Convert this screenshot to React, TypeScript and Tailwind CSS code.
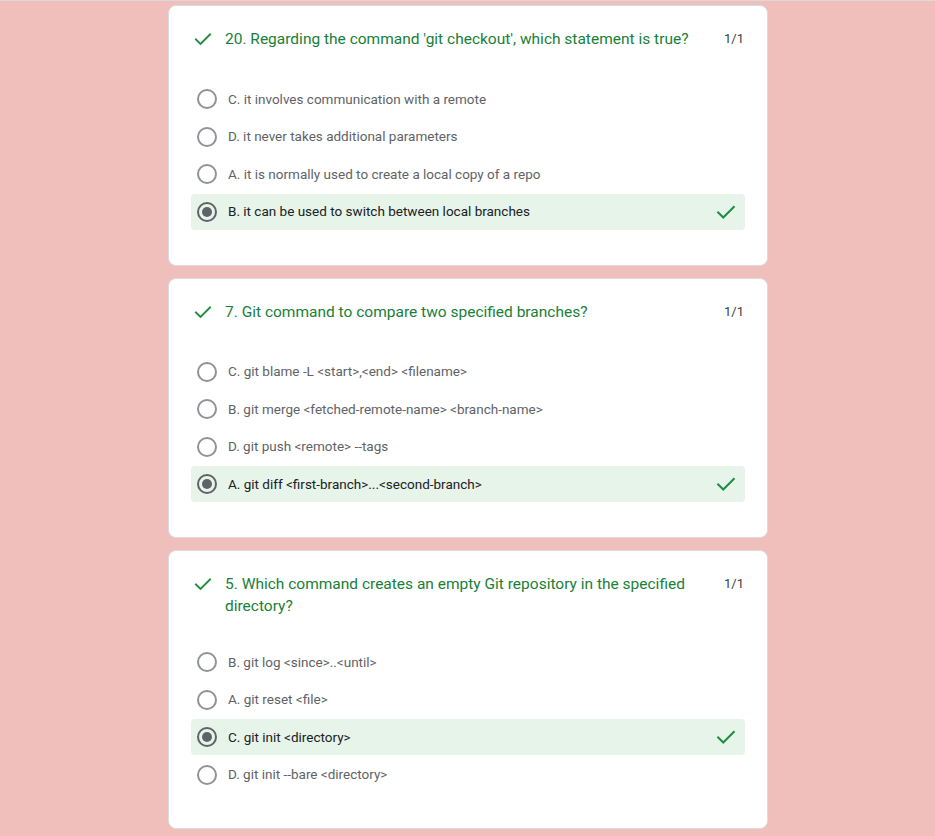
import React from "react";

type Opt = { label: string; selected?: boolean };
type Q = { title: string; options: Opt[] };

const questions: Q[] = [
  {
    title: "20. Regarding the command 'git checkout', which statement is true?",
    options: [
      { label: "C. it involves communication with a remote" },
      { label: "D. it never takes additional parameters" },
      { label: "A. it is normally used to create a local copy of a repo" },
      { label: "B. it can be used to switch between local branches", selected: true },
    ],
  },
  {
    title: "7. Git command to compare two specified branches?",
    options: [
      { label: "C. git blame -L <start>,<end> <filename>" },
      { label: "B. git merge <fetched-remote-name> <branch-name>" },
      { label: "D. git push <remote> --tags" },
      { label: "A. git diff <first-branch>...<second-branch>", selected: true },
    ],
  },
  {
    title: "5. Which command creates an empty Git repository in the specified directory?",
    options: [
      { label: "B. git log <since>..<until>" },
      { label: "A. git reset <file>" },
      { label: "C. git init <directory>", selected: true },
      { label: "D. git init --bare <directory>" },
    ],
  },
];

function Check({ className }: { className?: string }) {
  return (
    <svg viewBox="0 0 24 24" className={className} fill="none">
      <path d="M3.5 12.5 L9 18 L20.5 6.5" stroke="#1e8e3e" strokeWidth="2.2" strokeLinecap="square" />
    </svg>
  );
}

function Radio({ selected }: { selected?: boolean }) {
  return (
    <div
      className={
        "w-[20px] h-[20px] rounded-full border-2 flex items-center justify-center shrink-0 " +
        (selected ? "border-[#5f6368]" : "border-[#8f9398]")
      }
    >
      {selected && <div className="w-[10px] h-[10px] rounded-full bg-[#5f6368]" />}
    </div>
  );
}

function Card({ q }: { q: Q }) {
  return (
    <div className="bg-white rounded-lg border border-[#dadce0] px-[22px] pt-[22px] pb-[35px]">
      <div className="flex items-start min-h-[26px] mb-[27px] pl-[2px]">
        <div className="h-[22px] flex items-center shrink-0">
          <Check className="w-[20px] h-[20px]" />
        </div>
        <div className="flex-1 ml-[12px] pr-[24px] text-[15.5px] leading-[22px] text-[#188038]">{q.title}</div>
        <div className="h-[22px] flex items-center text-[13px] text-[#3c4043] mr-[1px]">1/1</div>
      </div>
      <div className="flex flex-col gap-[1.5px]">
        {q.options.map((o, i) => (
          <div
            key={i}
            className={
              "h-[36px] flex items-center pl-[6px] pr-[8px] rounded " + (o.selected ? "bg-[#e6f4ea]" : "")
            }
          >
            <Radio selected={o.selected} />
            <div className={"ml-[11px] flex-1 text-[13.5px] " + (o.selected ? "text-[#202124]" : "text-[#5f6368]")}>
              {o.label}
            </div>
            {o.selected && <Check className="w-[22px] h-[22px]" />}
          </div>
        ))}
      </div>
    </div>
  );
}

export default function App() {
  return (
    <div
      className="min-h-[836px] bg-[#f0bebb] border-t border-[#d9d9d9] pt-[4px] pb-[8px]"
      style={{ fontFamily: "Roboto, 'Liberation Sans', sans-serif" }}
    >
      <div className="w-[600px] ml-[168px] flex flex-col gap-[12px]">
        {questions.map((q, i) => (
          <Card key={i} q={q} />
        ))}
      </div>
    </div>
  );
}
